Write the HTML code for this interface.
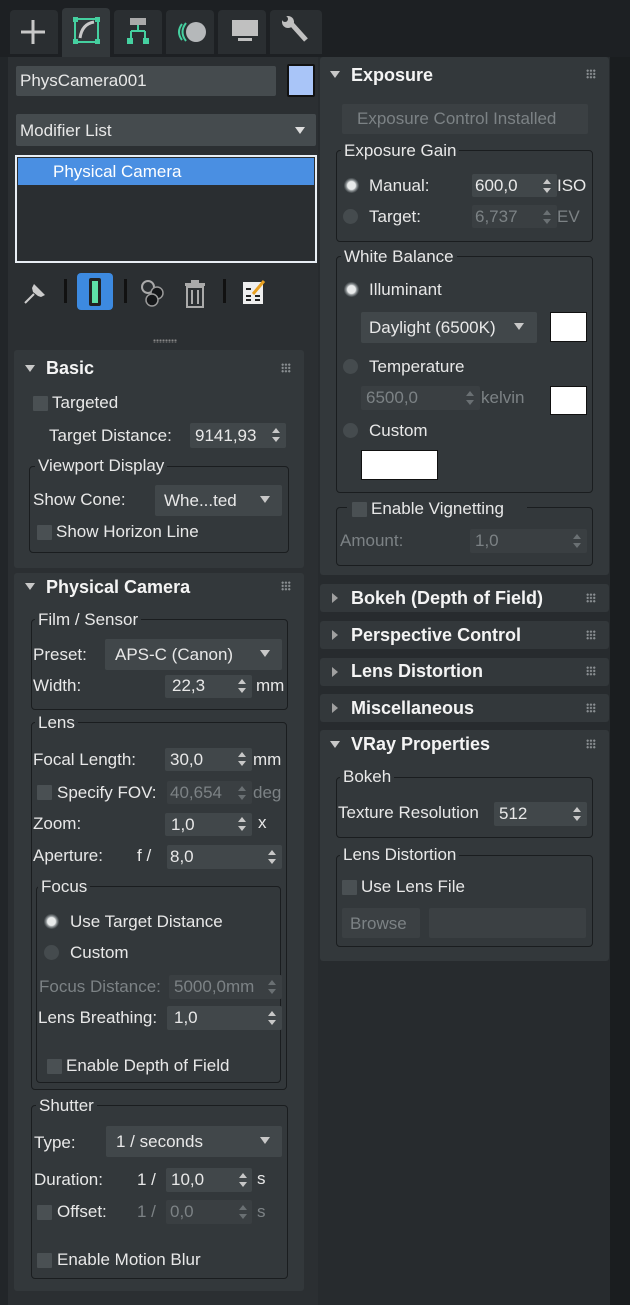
<!DOCTYPE html>
<html><head><meta charset="utf-8"><style>
*{margin:0;padding:0;box-sizing:border-box}
body{width:630px;height:1305px;background:#222629;position:relative;overflow:hidden;font-family:"Liberation Sans",sans-serif;color:#e6e6e6}
.a{position:absolute}
.t{position:absolute;font-size:17px;line-height:20px;white-space:nowrap;color:#e8e8e8}
.d{color:#7c8285}
.h{position:absolute;font-size:18px;font-weight:bold;color:#f4f4f4;white-space:nowrap;line-height:22px}
.ro{position:absolute;background:#33383b;border-radius:3px}
.fld{position:absolute;background:#41474a;border-radius:2px}
.g{position:absolute;border:1.5px solid #1a1d1f;border-radius:4px}
.gl{position:absolute;background:#33383b;padding:0 3px;font-size:17px;line-height:20px;white-space:nowrap;color:#e8e8e8}
.cb{position:absolute;width:15px;height:15px;background:#4a5053;border-radius:1px}
.rd{position:absolute;width:15px;height:15px;border-radius:50%;background:#454b4e}
.rd.on{background:radial-gradient(circle,#e8eaea 0 4px,#9fa4a6 5px,#4a5053 7px)}
.tri{position:absolute;width:0;height:0;border-left:5px solid transparent;border-right:5px solid transparent;border-top:7px solid #c8c8c8}
.tr{position:absolute;width:0;height:0;border-top:5px solid transparent;border-bottom:5px solid transparent;border-left:6px solid #a0a0a0}
.sp{position:absolute;width:8px;height:14px}
.sp:before{content:"";position:absolute;left:0;top:0;border-left:4px solid transparent;border-right:4px solid transparent;border-bottom:5px solid #c8c8c8}
.sp:after{content:"";position:absolute;left:0;bottom:0;border-left:4px solid transparent;border-right:4px solid transparent;border-top:5px solid #c8c8c8}
.sp.dm:before{border-bottom-color:#6a7073}.sp.dm:after{border-top-color:#6a7073}
.grip{position:absolute;width:10px;height:10px;background-image:radial-gradient(circle,#8a8f92 1px,transparent 1.2px);background-size:3.3px 3.3px}
.sw{position:absolute;background:#fff;border:1px solid #111}
</style></head><body>
<div class="a" style="left:0;top:0;width:630px;height:57px;background:#1d2023"></div>
<div class="a" style="left:10px;top:10px;width:48px;height:44px;background:#2a2e31;border-radius:4px 4px 0 0"></div>
<div class="a" style="left:62px;top:8px;width:48px;height:49px;background:#33383b;border-radius:4px 4px 0 0"></div>
<div class="a" style="left:114px;top:10px;width:48px;height:44px;background:#2a2e31;border-radius:4px 4px 0 0"></div>
<div class="a" style="left:166px;top:10px;width:48px;height:44px;background:#2a2e31;border-radius:4px 4px 0 0"></div>
<div class="a" style="left:218px;top:10px;width:48px;height:44px;background:#2a2e31;border-radius:4px 4px 0 0"></div>
<div class="a" style="left:270px;top:10px;width:52px;height:44px;background:#2a2e31;border-radius:4px 4px 0 0"></div>
<svg class="a" style="left:0;top:0" width="330" height="56">
<path d="M33 20V44M21 32H45" stroke="#c8c8c8" stroke-width="3"/>
<rect x="75" y="19" width="23" height="23" fill="none" stroke="#45d0a0" stroke-width="2"/>
<rect x="73" y="17" width="5" height="5" fill="#45d0a0"/><rect x="95" y="17" width="5" height="5" fill="#45d0a0"/><rect x="73" y="39" width="5" height="5" fill="#45d0a0"/><rect x="95" y="39" width="5" height="5" fill="#45d0a0"/>
<path d="M80 38Q82 24 94 22" stroke="#c8c8c8" stroke-width="3" fill="none"/>
<rect x="130" y="18" width="16" height="7" fill="#aaa"/><path d="M138 25V31M131 31H145M131 31V39M145 31V39" stroke="#45d0a0" stroke-width="2" fill="none"/>
<rect x="127" y="38" width="6" height="6" fill="#45d0a0"/><rect x="143" y="38" width="6" height="6" fill="#45d0a0"/>
<circle cx="196" cy="32" r="10" fill="#b5b8ba"/><path d="M186 23Q179 32 186 41M182 24Q176 32 182 40" stroke="#45d0a0" stroke-width="2" fill="none"/>
<rect x="232" y="20" width="26" height="16" fill="#c0c0c0"/><rect x="238" y="38" width="14" height="3" fill="#c0c0c0"/>
<path d="M288 20L306 40" stroke="#c0c0c0" stroke-width="5"/><circle cx="288" cy="22" r="6" fill="#c0c0c0"/><circle cx="285" cy="19" r="3" fill="#2a2e31"/>
</svg>
<div class="a" style="left:8px;top:57px;width:310px;height:1248px;background:#2b2f32"></div>
<div class="a" style="left:610px;top:57px;width:20px;height:1248px;background:#1a1d1f"></div>
<div class="a" style="left:318px;top:57px;width:292px;height:1248px;background:#272b2e"></div>
<div class="fld" style="left:16px;top:66px;width:260px;height:30px;background:#454b4e"></div>
<div class="t" style="left:20px;top:71px">PhysCamera001</div>
<div class="a" style="left:287px;top:64px;width:28px;height:33px;background:#111;border-radius:2px"></div>
<div class="a" style="left:289px;top:66px;width:24px;height:29px;background:#a9c5f8"></div>
<div class="fld" style="left:16px;top:114px;width:300px;height:32px;background:#454b4e"></div>
<div class="t" style="left:20px;top:121px">Modifier List</div>
<div class="tri" style="left:295px;top:127px;border-top-color:#ddd"></div>
<div class="a" style="left:15px;top:155px;width:302px;height:108px;border:2px solid #e8eef4;background:#2a2e31"></div>
<div class="a" style="left:18px;top:158px;width:296px;height:27px;background:#4a8fe2"></div>
<div class="t" style="left:53px;top:162px;color:#fff">Physical Camera</div>
<svg class="a" style="left:0;top:265px" width="320" height="50">
<path d="M25 38L34 29" stroke="#ccc" stroke-width="2"/><path d="M34 19L45 30L41 32L38 31L33 27L32 23Z" fill="#ccc"/>
<rect x="64" y="14" width="3" height="24" fill="#111"/>
<rect x="77" y="8" width="36" height="37" rx="4" fill="#3d8ae0"/>
<rect x="89" y="13" width="12" height="28" rx="2" fill="#222" /><rect x="92" y="16" width="6" height="22" fill="#5ee0a8"/>
<rect x="124" y="14" width="3" height="24" fill="#111"/>
<circle cx="148" cy="22" r="6" fill="none" stroke="#aaa" stroke-width="2"/><circle cx="157" cy="28" r="6" fill="#151719" stroke="#999" stroke-width="1.5"/><circle cx="152" cy="35" r="6" fill="#151719" stroke="#999" stroke-width="1.5"/>
<rect x="185" y="18" width="20" height="3" fill="#aaa"/><rect x="191" y="15" width="8" height="3" fill="#aaa"/><rect x="187" y="22" width="16" height="20" fill="none" stroke="#aaa" stroke-width="2"/><path d="M192 25V39M198 25V39" stroke="#aaa" stroke-width="2"/>
<rect x="223" y="14" width="3" height="24" fill="#111"/>
<rect x="243" y="17" width="20" height="22" fill="#eee"/><path d="M246 24H251M246 31H251M255 31H260M246 35H251M255 35H260" stroke="#222" stroke-width="2"/><path d="M253 29L264 16" stroke="#e8a020" stroke-width="3"/>
</svg>
<div class="a" style="left:153px;top:339px;width:24px;height:4px;background-image:radial-gradient(circle,#888 1px,transparent 1.2px);background-size:3px 3px"></div>
<div class="ro" style="left:14px;top:350px;width:290px;height:218px"></div>
<div class="tri" style="left:25px;top:365px"></div>
<div class="h" style="left:46px;top:357px">Basic</div>
<div class="grip" style="left:281px;top:363px"></div>
<div class="cb" style="left:33px;top:396px"></div><div class="t" style="left:52px;top:393px">Targeted</div>
<div class="t" style="left:49px;top:426px">Target Distance:</div>
<div class="fld" style="left:190px;top:423px;width:96px;height:25px"></div><div class="t" style="left:195px;top:426px">9141,93</div><div class="sp" style="left:272px;top:428px"></div>
<div class="g" style="left:29px;top:466px;width:260px;height:87px"></div><div class="gl" style="left:35px;top:456px">Viewport Display</div>
<div class="t" style="left:33px;top:490px">Show Cone:</div>
<div class="fld" style="left:155px;top:485px;width:127px;height:31px"></div><div class="t" style="left:164px;top:491px">Whe...ted</div><div class="tri" style="left:260px;top:496px"></div>
<div class="cb" style="left:37px;top:525px"></div><div class="t" style="left:56px;top:522px">Show Horizon Line</div>
<div class="ro" style="left:14px;top:573px;width:290px;height:718px"></div>
<div class="tri" style="left:25px;top:583px"></div>
<div class="h" style="left:46px;top:576px">Physical Camera</div>
<div class="grip" style="left:281px;top:581px"></div>
<div class="g" style="left:31px;top:619px;width:257px;height:91px"></div><div class="gl" style="left:35px;top:610px">Film / Sensor</div>
<div class="t" style="left:33px;top:645px">Preset:</div>
<div class="fld" style="left:105px;top:639px;width:177px;height:31px"></div><div class="t" style="left:115px;top:645px">APS-C (Canon)</div><div class="tri" style="left:260px;top:650px"></div>
<div class="t" style="left:33px;top:676px">Width:</div>
<div class="fld" style="left:165px;top:675px;width:87px;height:23px"></div><div class="t" style="left:172px;top:676px">22,3</div><div class="sp" style="left:238px;top:679px"></div><div class="t" style="left:256px;top:676px">mm</div>
<div class="g" style="left:31px;top:722px;width:256px;height:368px"></div><div class="gl" style="left:35px;top:713px">Lens</div>
<div class="t" style="left:33px;top:750px">Focal Length:</div>
<div class="fld" style="left:165px;top:748px;width:87px;height:23px"></div><div class="t" style="left:170px;top:750px">30,0</div><div class="sp" style="left:238px;top:752px"></div><div class="t" style="left:253px;top:750px">mm</div>
<div class="cb" style="left:37px;top:785px"></div><div class="t" style="left:57px;top:783px">Specify FOV:</div>
<div class="fld" style="left:167px;top:781px;width:85px;height:23px;background:#3a3f42"></div><div class="t d" style="left:170px;top:783px">40,654</div><div class="sp dm" style="left:238px;top:786px"></div><div class="t d" style="left:253px;top:783px">deg</div>
<div class="t" style="left:33px;top:814px">Zoom:</div>
<div class="fld" style="left:165px;top:813px;width:87px;height:23px"></div><div class="t" style="left:171px;top:815px">1,0</div><div class="sp" style="left:238px;top:817px"></div><div class="t" style="left:258px;top:813px">x</div>
<div class="t" style="left:33px;top:846px">Aperture:</div><div class="t" style="left:137px;top:846px">f /</div>
<div class="fld" style="left:167px;top:845px;width:115px;height:24px"></div><div class="t" style="left:170px;top:847px">8,0</div><div class="sp" style="left:268px;top:850px"></div>
<div class="g" style="left:36px;top:886px;width:245px;height:197px"></div><div class="gl" style="left:38px;top:877px">Focus</div>
<div class="rd on" style="left:44px;top:914px"></div><div class="t" style="left:70px;top:912px">Use Target Distance</div>
<div class="rd" style="left:44px;top:945px"></div><div class="t" style="left:70px;top:943px">Custom</div>
<div class="t d" style="left:39px;top:977px">Focus Distance:</div>
<div class="fld" style="left:169px;top:975px;width:113px;height:24px;background:#3a3f42"></div><div class="t d" style="left:174px;top:977px">5000,0mm</div><div class="sp dm" style="left:268px;top:980px"></div>
<div class="t" style="left:38px;top:1008px">Lens Breathing:</div>
<div class="fld" style="left:167px;top:1006px;width:115px;height:24px"></div><div class="t" style="left:174px;top:1008px">1,0</div><div class="sp" style="left:268px;top:1011px"></div>
<div class="cb" style="left:47px;top:1059px"></div><div class="t" style="left:66px;top:1056px">Enable Depth of Field</div>
<div class="g" style="left:31px;top:1105px;width:257px;height:174px"></div><div class="gl" style="left:36px;top:1096px">Shutter</div>
<div class="t" style="left:34px;top:1133px">Type:</div>
<div class="fld" style="left:106px;top:1126px;width:176px;height:31px"></div><div class="t" style="left:116px;top:1132px">1 / seconds</div><div class="tri" style="left:260px;top:1137px"></div>
<div class="t" style="left:34px;top:1170px">Duration:</div><div class="t" style="left:137px;top:1170px">1 /</div>
<div class="fld" style="left:166px;top:1168px;width:86px;height:24px"></div><div class="t" style="left:171px;top:1170px">10,0</div><div class="sp" style="left:239px;top:1173px"></div><div class="t" style="left:257px;top:1169px">s</div>
<div class="cb" style="left:37px;top:1205px"></div><div class="t" style="left:57px;top:1202px">Offset:</div><div class="t d" style="left:137px;top:1202px">1 /</div>
<div class="fld" style="left:166px;top:1200px;width:86px;height:24px;background:#3a3f42"></div><div class="t d" style="left:170px;top:1202px">0,0</div><div class="sp dm" style="left:239px;top:1205px"></div><div class="t d" style="left:257px;top:1202px">s</div>
<div class="cb" style="left:37px;top:1253px"></div><div class="t" style="left:57px;top:1250px">Enable Motion Blur</div>
<div class="ro" style="left:320px;top:57px;width:289px;height:518px"></div>
<div class="tri" style="left:330px;top:71px"></div>
<div class="h" style="left:351px;top:64px">Exposure</div>
<div class="grip" style="left:586px;top:69px"></div>
<div class="fld" style="left:342px;top:104px;width:246px;height:30px;background:#3b4043"></div><div class="t d" style="left:357px;top:109px">Exposure Control Installed</div>
<div class="g" style="left:336px;top:150px;width:257px;height:92px"></div><div class="gl" style="left:341px;top:141px">Exposure Gain</div>
<div class="rd on" style="left:344px;top:178px"></div><div class="t" style="left:369px;top:176px">Manual:</div>
<div class="fld" style="left:472px;top:174px;width:85px;height:23px"></div><div class="t" style="left:475px;top:176px">600,0</div><div class="sp" style="left:543px;top:179px"></div><div class="t" style="left:557px;top:176px">ISO</div>
<div class="rd" style="left:343px;top:209px"></div><div class="t" style="left:369px;top:207px">Target:</div>
<div class="fld" style="left:472px;top:205px;width:85px;height:23px;background:#3a3f42"></div><div class="t d" style="left:475px;top:207px">6,737</div><div class="sp dm" style="left:543px;top:210px"></div><div class="t d" style="left:557px;top:207px">EV</div>
<div class="g" style="left:336px;top:256px;width:257px;height:237px"></div><div class="gl" style="left:341px;top:247px">White Balance</div>
<div class="rd on" style="left:344px;top:282px"></div><div class="t" style="left:369px;top:280px">Illuminant</div>
<div class="fld" style="left:361px;top:312px;width:176px;height:31px"></div><div class="t" style="left:369px;top:318px">Daylight (6500K)</div><div class="tri" style="left:514px;top:323px"></div>
<div class="sw" style="left:550px;top:312px;width:37px;height:30px"></div>
<div class="rd" style="left:343px;top:359px"></div><div class="t" style="left:369px;top:357px">Temperature</div>
<div class="fld" style="left:361px;top:386px;width:119px;height:24px;background:#3a3f42"></div><div class="t d" style="left:366px;top:388px">6500,0</div><div class="sp dm" style="left:466px;top:391px"></div><div class="t d" style="left:481px;top:388px">kelvin</div>
<div class="sw" style="left:550px;top:386px;width:37px;height:29px"></div>
<div class="rd" style="left:343px;top:423px"></div><div class="t" style="left:369px;top:421px">Custom</div>
<div class="sw" style="left:361px;top:450px;width:77px;height:30px"></div>
<div class="g" style="left:336px;top:507px;width:257px;height:59px"></div>
<div class="a" style="left:347px;top:498px;width:180px;height:22px;background:#33383b"></div>
<div class="cb" style="left:352px;top:502px"></div><div class="t" style="left:371px;top:499px">Enable Vignetting</div>
<div class="t d" style="left:340px;top:531px">Amount:</div>
<div class="fld" style="left:470px;top:529px;width:117px;height:24px;background:#3a3f42"></div><div class="t d" style="left:475px;top:531px">1,0</div><div class="sp dm" style="left:573px;top:534px"></div>
<div class="ro" style="left:320px;top:584px;width:289px;height:28px"></div><div class="tr" style="left:332px;top:593px"></div><div class="h" style="left:351px;top:587px">Bokeh (Depth of Field)</div><div class="grip" style="left:586px;top:593px"></div>
<div class="ro" style="left:320px;top:621px;width:289px;height:28px"></div><div class="tr" style="left:332px;top:630px"></div><div class="h" style="left:351px;top:624px">Perspective Control</div><div class="grip" style="left:586px;top:630px"></div>
<div class="ro" style="left:320px;top:658px;width:289px;height:28px"></div><div class="tr" style="left:332px;top:667px"></div><div class="h" style="left:351px;top:660px">Lens Distortion</div><div class="grip" style="left:586px;top:666px"></div>
<div class="ro" style="left:320px;top:694px;width:289px;height:28px"></div><div class="tr" style="left:332px;top:703px"></div><div class="h" style="left:351px;top:697px">Miscellaneous</div><div class="grip" style="left:586px;top:703px"></div>
<div class="ro" style="left:320px;top:730px;width:289px;height:231px"></div><div class="tri" style="left:330px;top:741px"></div><div class="h" style="left:351px;top:733px">VRay Properties</div><div class="grip" style="left:586px;top:739px"></div>
<div class="g" style="left:336px;top:777px;width:257px;height:61px"></div><div class="gl" style="left:340px;top:767px">Bokeh</div>
<div class="t" style="left:338px;top:803px">Texture Resolution</div>
<div class="fld" style="left:494px;top:802px;width:93px;height:24px"></div><div class="t" style="left:499px;top:804px">512</div><div class="sp" style="left:573px;top:807px"></div>
<div class="g" style="left:336px;top:855px;width:257px;height:92px"></div><div class="gl" style="left:340px;top:845px">Lens Distortion</div>
<div class="cb" style="left:342px;top:880px"></div><div class="t" style="left:361px;top:877px">Use Lens File</div>
<div class="fld" style="left:342px;top:908px;width:78px;height:30px;background:#3b4043"></div><div class="t d" style="left:350px;top:914px">Browse</div>
<div class="fld" style="left:429px;top:908px;width:157px;height:30px;background:#3b4043"></div>
</body></html>
